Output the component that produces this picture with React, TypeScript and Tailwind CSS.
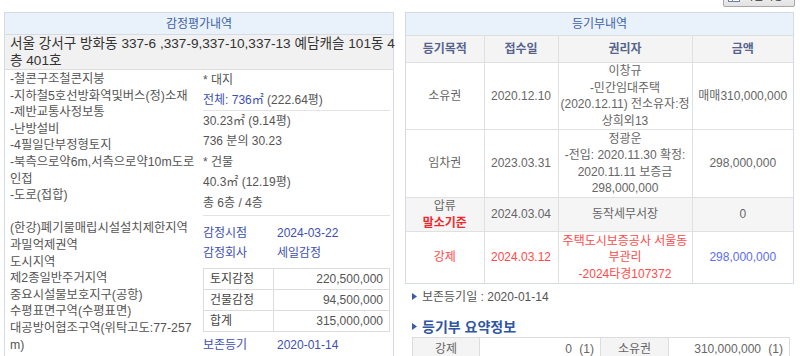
const landNotes = [
  "-철콘구조철콘지붕",
  "-지하철5호선방화역및버스(정)소재",
  "-제반교통사정보통",
  "-난방설비",
  "-4필일단부정형토지",
  "-북측으로약6m,서측으로약10m도로",
  "인접",
  "-도로(접합)",
  "\u00a0",
  "(한강)폐기물매립시설설치제한지역",
  "과밀억제권역",
  "도시지역",
  "제2종일반주거지역",
  "중요시설물보호지구(공항)",
  "수평표면구역(수평표면)",
  "대공방어협조구역(위탁고도:77-257",
  "m)",
];

const appraisal = [
  { label: "토지감정", value: "220,500,000" },
  { label: "건물감정", value: "94,500,000" },
  { label: "합계", value: "315,000,000" },
];

function Bullet() {
  return (
    <svg width="5" height="7" viewBox="0 0 5 7" className="shrink-0">
      <path d="M0 0 L5 3.5 L0 7 Z" fill="#3b5ba5" />
    </svg>
  );
}

function AppraisalPanel() {
  return (
    <section className="w-[390px] border border-[#d5dbe4]">
      <div className="h-[22px] border-b border-[#d5dbe4] bg-[#e9f1fb] text-center leading-[22px] text-[#3e62a6]">
        감정평가내역
      </div>
      <div className="border-b border-[#dcdcdc] bg-[#f1f1f1] px-[5px] text-[13.6px] leading-[17px] text-[#333]">
        <div className="whitespace-nowrap">서울 강서구 방화동 337-6 ,337-9,337-10,337-13 예담캐슬 101동 4</div>
        <div>층 401호</div>
      </div>
      <div className="grid grid-cols-[195px_1fr]">
        <div className="pl-[5px] pt-[1px] text-[12.3px] leading-[16.6px] text-[#555]">
          {landNotes.map((line, i) => (
            <div key={i} className="whitespace-nowrap">
              {line}
            </div>
          ))}
        </div>
        <div className="pr-[3px] pl-[3px] text-[#555]">
          <div className="border-b border-[#e3e3e3] leading-[20px]">
            <div>* 대지</div>
            <div>
              <span className="text-[#3d4fb0]">전체: 736㎡</span> (222.64평)
            </div>
          </div>
          <div className="border-b border-[#e3e3e3] pb-[2px] leading-[20.4px]">
            <div>30.23㎡ (9.14평)</div>
            <div>736 분의 30.23</div>
            <div>* 건물</div>
            <div>40.3㎡ (12.19평)</div>
            <div>총 6층 / 4층</div>
          </div>
          <div className="grid grid-cols-[74px_1fr] pt-[7px] leading-[20px] text-[#3d4fb0]">
            <span>감정시점</span>
            <span>2024-03-22</span>
            <span>감정회사</span>
            <span>세일감정</span>
          </div>
          <table className="mt-[5px] w-full border-collapse text-[12px]">
            <tbody>
              {appraisal.map((row) => (
                <tr key={row.label} className="h-[21px]">
                  <td className="w-[70px] border border-[#dcdcdc] pl-[6px] text-[#444]">{row.label}</td>
                  <td className="border border-[#dcdcdc] pr-[6px] text-right">{row.value}</td>
                </tr>
              ))}
            </tbody>
          </table>
          <div className="mt-[3px] grid grid-cols-[74px_1fr] leading-[20px] text-[#3d4fb0]">
            <span>보존등기</span>
            <span>2020-01-14</span>
          </div>
        </div>
      </div>
    </section>
  );
}

function RegistryPanel() {
  const cell = "border-l border-t border-[#e0e0e0] text-center align-middle";
  return (
    <section className="w-[389px]">
      <div className="border border-[#d5dbe4]">
        <div className="h-[22px] bg-[#e9f1fb] text-center leading-[22px] text-[#3e62a6]">등기부내역</div>
        <table className="w-full table-fixed border-collapse leading-[16.5px]">
          <colgroup>
            <col className="w-[78px]" />
            <col className="w-[74px]" />
            <col className="w-[134px]" />
            <col />
          </colgroup>
          <thead>
            <tr className="h-[27px] bg-[#f4f4f4] font-bold text-[#56648f]">
              <th className="border-t border-[#e0e0e0] font-bold">등기목적</th>
              <th className={cell + " font-bold"}>접수일</th>
              <th className={cell + " font-bold"}>권리자</th>
              <th className={cell + " font-bold"}>금액</th>
            </tr>
          </thead>
          <tbody className="text-[#666]">
            <tr className="h-[67px]">
              <td className="border-t border-[#e0e0e0] text-center">소유권</td>
              <td className={cell}>2020.12.10</td>
              <td className={cell}>
                이창규
                <br />
                -민간임대주택
                <br />
                (2020.12.11) 전소유자:정
                <br />
                상희외13
              </td>
              <td className={cell}>매매310,000,000</td>
            </tr>
            <tr className="h-[68px]">
              <td className="border-t border-[#e0e0e0] text-center">임차권</td>
              <td className={cell}>2023.03.31</td>
              <td className={cell}>
                정광운
                <br />
                -전입: 2020.11.30 확정:
                <br />
                2020.11.11 보증금
                <br />
                298,000,000
              </td>
              <td className={cell}>298,000,000</td>
            </tr>
            <tr className="h-[34px] bg-[#f5f5f5]">
              <td className="border-t border-[#e0e0e0] text-center">
                압류
                <br />
                <span className="font-bold text-[#f0282d]">말소기준</span>
              </td>
              <td className={cell}>2024.03.04</td>
              <td className={cell}>동작세무서장</td>
              <td className={cell}>0</td>
            </tr>
            <tr className="h-[51px] text-[#ff4a4a]">
              <td className="border-t border-[#e0e0e0] text-center">강제</td>
              <td className={cell}>2024.03.12</td>
              <td className={cell}>
                주택도시보증공사 서울동
                <br />
                부관리
                <br />
                -2024타경107372
              </td>
              <td className={cell + " text-[#5d6ef0]"}>298,000,000</td>
            </tr>
          </tbody>
        </table>
      </div>
      <div className="ml-[7px] mt-[5px] flex items-center gap-[5px] leading-[16px] text-[#555]">
        <Bullet />
        <span>보존등기일 : 2020-01-14</span>
      </div>
      <div className="ml-[7px] mt-[13px] flex items-center gap-[5px] text-[14px] font-bold leading-[18px] text-[#2f55a4]">
        <Bullet />
        <span>등기부 요약정보</span>
      </div>
      <table className="ml-[7px] mt-[1px] w-[378px] table-fixed border-collapse text-[#666]">
        <colgroup>
          <col className="w-[67px]" />
          <col className="w-[121px]" />
          <col className="w-[68px]" />
          <col />
        </colgroup>
        <tbody>
          <tr className="h-[23px]">
            <td className="border border-[#dcdcdc] bg-[#f4f4f4] text-center">강제</td>
            <td className="border border-[#dcdcdc] pr-[6px] text-right">
              0 <span className="ml-[4px]">(1)</span>
            </td>
            <td className="border border-[#dcdcdc] bg-[#f4f4f4] text-center">소유권</td>
            <td className="border border-[#dcdcdc] pr-[6px] text-right">
              310,000,000 <span className="ml-[4px]">(1)</span>
            </td>
          </tr>
        </tbody>
      </table>
    </section>
  );
}

export default function App() {
  return (
    <div className="h-[356px] w-[800px] overflow-hidden bg-white font-['Liberation_Sans','Noto_Sans_CJK_KR',sans-serif] text-[12px] text-[#666]">
      <div className="flex h-[12px] justify-end overflow-hidden pr-[5px]">
        <button
          type="button"
          className="-mt-[15px] flex h-[22px] w-[72px] items-center gap-[3px] rounded-[2px] border border-[#a8a8a8] bg-gradient-to-b from-white to-[#e2e2e2] px-[4px] text-[11px] text-[#333]"
        >
          <svg width="12" height="11" viewBox="0 0 12 11">
            <rect x="0.5" y="0.5" width="11" height="10" fill="#fff" stroke="#6b7fa8" />
            <path d="M0.5 4 H11.5 M0.5 7.5 H11.5 M4.5 0.5 V10.5" stroke="#6b7fa8" />
          </svg>
          <span>엑셀저장</span>
        </button>
      </div>
      <div className="flex gap-[11px] pl-[4px]">
        <AppraisalPanel />
        <RegistryPanel />
      </div>
    </div>
  );
}
